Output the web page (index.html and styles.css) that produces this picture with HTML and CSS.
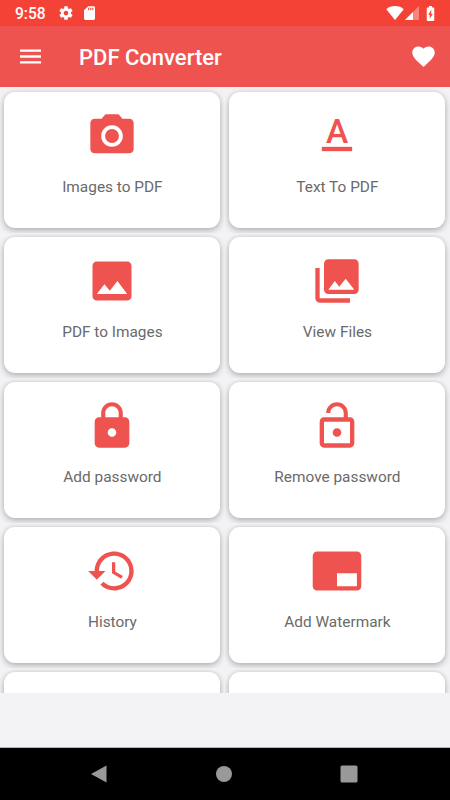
FILE: index.html
```html
<!DOCTYPE html>
<html lang="en">
<head>
    <meta charset="UTF-8">
    <meta name="viewport" content="width=device-width, initial-scale=1.0">
    <title>PDF Converter</title>
    <link rel="stylesheet" href="styles.css">
</head>
<body>
    <div class="screen">
        <!-- Status Bar -->
        <div class="status-bar">
            <span class="time">9:58</span>
            <svg class="gear" viewBox="0 0 24 24"><path d="M19.43 12.98c.04-.32.07-.64.07-.98s-.03-.66-.07-.98l2.11-1.65c.19-.15.24-.42.12-.64l-2-3.46c-.12-.22-.39-.3-.61-.22l-2.49 1c-.52-.4-1.08-.73-1.69-.98l-.38-2.65C14.46 2.18 14.25 2 14 2h-4c-.25 0-.46.18-.49.42l-.38 2.65c-.61.25-1.17.59-1.69.98l-2.49-1c-.23-.09-.49 0-.61.22l-2 3.46c-.13.22-.07.49.12.64l2.11 1.65c-.04.32-.07.65-.07.98s.03.66.07.98l-2.11 1.65c-.19.15-.24.42-.12.64l2 3.46c.12.22.39.3.61.22l2.49-1c.52.4 1.08.73 1.69.98l.38 2.65c.03.24.24.42.49.42h4c.25 0 .46-.18.49-.42l.38-2.65c.61-.25 1.17-.59 1.69-.98l2.49 1c.23.09.49 0 .61-.22l2-3.46c.12-.22.07-.49-.12-.64l-2.11-1.65zM12 15.5c-1.93 0-3.5-1.57-3.5-3.5s1.57-3.5 3.5-3.5 3.5 1.57 3.5 3.5-1.57 3.5-3.5 3.5z"/></svg>
            <svg class="sd-card" viewBox="4 2 16 20"><path d="M18 2h-8L4.02 8 4 20c0 1.100.9 2 2 2h12c1.100 0 2-.9 2-2V4c0-1.100-.9-2-2-2z"/><path class="notch" d="M10 4.500h1.600v3.500H10zM13 4.500h1.600v3.500H13zM16 4.500h1.600v3.500H16z"/></svg>
            <div class="status-right">
                <svg class="wifi" viewBox="0 0 18 14"><path d="M9 14 .3 3.200C2.500 1.200 5.500 0 9 0s6.500 1.200 8.700 3.200z"/></svg>
                <svg class="signal" viewBox="0 0 14 14"><path class="faded" d="M14 0v14H0z"/><path d="M8 6v8H0z"/></svg>
                <svg class="battery" viewBox="7 2 10 20"><path d="M15.670 4H14V2h-4v2H8.330C7.600 4 7 4.600 7 5.330v15.330C7 21.400 7.600 22 8.330 22h7.330c.74 0 1.340-.6 1.340-1.330V5.330C17 4.600 16.400 4 15.670 4zM11 19v-5.500H9L13 7v5.500h2z"/></svg>
            </div>
        </div>

        <!-- App Bar -->
        <div class="app-bar">
            <svg class="menu" viewBox="3 6 18 12"><path d="M3 18h18v-2H3v2zm0-5h18v-2H3v2zm0-7v2h18V6H3z"/></svg>
            <h1>PDF Converter</h1>
            <svg class="heart" viewBox="0 0 24 24"><path d="M12 21.350l-1.450-1.320C5.400 15.360 2 12.280 2 8.500 2 5.420 4.420 3 7.500 3c1.740 0 3.410.81 4.500 2.090C13.090 3.810 14.760 3 16.500 3 19.580 3 22 5.420 22 8.500c0 3.780-3.400 6.860-8.550 11.540L12 21.350z"/></svg>
        </div>

        <!-- Tools -->
        <div class="grid">
            <div class="cell"><div class="card">
                <svg viewBox="0 0 24 24"><circle cx="12" cy="12" r="3.200"/><path d="M9 2L7.170 4H4c-1.100 0-2 .9-2 2v12c0 1.100.9 2 2 2h16c1.100 0 2-.9 2-2V6c0-1.100-.9-2-2-2h-3.170L15 2H9zm3 15c-2.760 0-5-2.240-5-5s2.240-5 5-5 5 2.240 5 5-2.240 5-5 5z"/></svg>
                <p>Images to PDF</p>
            </div></div>
            <div class="cell"><div class="card">
                <svg viewBox="0 0 24 24"><text class="letter" x="12.1" y="15" text-anchor="middle">A</text><path d="M5 17h14v2H5z"/></svg>
                <p>Text To PDF</p>
            </div></div>
            <div class="cell"><div class="card">
                <svg viewBox="0 0 24 24"><path d="M21 19V5c0-1.100-.9-2-2-2H5c-1.100 0-2 .9-2 2v14c0 1.100.9 2 2 2h14c1.100 0 2-.9 2-2zM8.500 13.500l2.500 3.010L14.500 12l4.500 6H5l3.500-4.500z"/></svg>
                <p>PDF to Images</p>
            </div></div>
            <div class="cell"><div class="card">
                <svg viewBox="0 0 24 24"><path d="M22 16V4c0-1.100-.9-2-2-2H8c-1.100 0-2 .9-2 2v12c0 1.100.9 2 2 2h12c1.100 0 2-.9 2-2zm-11-4l2.030 2.710L16 11l4 5H8l3-4zM2 6v14c0 1.100.9 2 2 2h14v-2H4V6H2z"/></svg>
                <p>View Files</p>
            </div></div>
            <div class="cell"><div class="card">
                <svg viewBox="0 0 24 24"><path d="M18 8h-1V6c0-2.760-2.240-5-5-5S7 3.240 7 6v2H6c-1.100 0-2 .9-2 2v10c0 1.100.9 2 2 2h12c1.100 0 2-.9 2-2V10c0-1.100-.9-2-2-2zm-6 9c-1.100 0-2-.9-2-2s.9-2 2-2 2 .9 2 2-.9 2-2 2zm3.100-9H8.900V6c0-1.710 1.390-3.100 3.100-3.100 1.710 0 3.100 1.390 3.100 3.100v2z"/></svg>
                <p>Add password</p>
            </div></div>
            <div class="cell"><div class="card">
                <svg viewBox="0 0 24 24"><path d="M12 17c1.100 0 2-.9 2-2s-.9-2-2-2-2 .9-2 2 .9 2 2 2zm6-9h-1V6c0-2.760-2.240-5-5-5S7 3.240 7 6h1.900c0-1.710 1.390-3.100 3.100-3.100 1.710 0 3.100 1.390 3.100 3.100v2H6c-1.100 0-2 .9-2 2v10c0 1.100.9 2 2 2h12c1.100 0 2-.9 2-2V10c0-1.100-.9-2-2-2zm0 12H6V10h12v10z"/></svg>
                <p>Remove password</p>
            </div></div>
            <div class="cell"><div class="card">
                <svg viewBox="0 0 24 24"><path d="M13 3c-4.970 0-9 4.030-9 9H1l3.890 3.890.07.14L9 12H6c0-3.870 3.130-7 7-7s7 3.130 7 7-3.130 7-7 7c-1.930 0-3.680-.79-4.940-2.060l-1.420 1.420C8.270 19.990 10.510 21 13 21c4.970 0 9-4.030 9-9s-4.030-9-9-9zm-1 5v5l4.280 2.540.72-1.210-3.500-2.080V8H12z"/></svg>
                <p>History</p>
            </div></div>
            <div class="cell"><div class="card">
                <svg viewBox="0 0 24 24"><path fill-rule="evenodd" d="M21.200 3H2.800c-1.100 0-2 .9-2 2v14c0 1.100.9 2 2 2h18.400c1.100 0 2-.9 2-2V5c0-1.100-.9-2-2-2zM12 13h9.200v6H12z"/></svg>
                <p>Add Watermark</p>
            </div></div>
            <div class="cell"><div class="card"></div></div>
            <div class="cell"><div class="card"></div></div>
        </div>

        <!-- Navigation Bar -->
        <div class="nav-bar">
            <svg viewBox="0 0 18 18"><path d="M16.500.5v17L1 9z"/></svg>
            <svg viewBox="0 0 18 18"><circle cx="9" cy="9" r="8"/></svg>
            <svg viewBox="0 0 18 18"><rect x=".5" y=".5" width="17" height="17" rx="1.500"/></svg>
        </div>
    </div>
</body>
</html>
```

FILE: styles.css
```css
/* Base Styles */
* {
    margin: 0;
    padding: 0;
    box-sizing: border-box;
}

body {
    font-family: Roboto, sans-serif;
    background-color: #f3f3f6;
}

svg {
    display: block;
    flex: none;
    fill: white;
}

.screen {
    display: flex;
    flex-direction: column;
    width: 450px;
    height: 800px;
    overflow: hidden;
}

/* Status Bar */
.status-bar {
    display: flex;
    align-items: center;
    height: 26px;
    padding: 0 15px;
    background-color: #f44336;
    color: white;
}

.time {
    width: 43px;
    font-size: 15.6px;
    font-weight: 500;
    line-height: 26px;
    padding-top: 2px;
}

.gear {
    width: 16px;
    height: 16px;
}

.sd-card {
    width: 11px;
    height: 14px;
    margin-left: 10px;
}

.sd-card .notch {
    fill: #f44336;
}

.status-right {
    display: flex;
    align-items: center;
    margin-left: auto;
}

.wifi {
    width: 18px;
    height: 14px;
    margin-right: 1px;
}

.signal {
    width: 14px;
    height: 14px;
    margin-right: 7px;
}

.faded {
    opacity: 0.35;
}

.battery {
    width: 9px;
    height: 15px;
}

/* App Bar */
.app-bar {
    display: flex;
    align-items: center;
    height: 61px;
    padding: 0 13px 0 20px;
    background-color: #ef5350;
}

.menu {
    width: 21px;
    height: 15px;
}

.app-bar h1 {
    flex: 1;
    margin-left: 38px;
    padding-top: 2px;
    font-size: 22px;
    font-weight: 500;
    line-height: 26px;
    color: white;
}

.heart {
    width: 27px;
    height: 27px;
}

/* Tools */
.grid {
    display: grid;
    grid-template-columns: 1fr 1fr;
    grid-auto-rows: 145px;
    height: 606px;
    padding-top: 0.5px;
    overflow: hidden;
}

.cell {
    padding: 4.5px 4.600px 4.5px 4.400px;
    overflow: hidden;
}

.card {
    height: 136px;
    padding-top: 18px;
    border-radius: 11px;
    background-color: white;
    box-shadow: 0 3px 7px rgba(0, 0, 0, 0.22), 0 0 5px rgba(0, 0, 0, 0.12);
}

.card svg {
    width: 52px;
    height: 52px;
    margin: 0 auto;
    fill: #ef5350;
}

.letter {
    font-size: 15.5px;
    font-weight: 500;
}

.card p {
    margin-top: 15px;
    font-size: 15.4px;
    line-height: 20px;
    text-align: center;
    color: #6a6a6a;
}

/* Navigation Bar */
.nav-bar {
    display: flex;
    justify-content: space-between;
    align-items: center;
    height: 53px;
    margin-top: auto;
    padding: 0 92px 0 90px;
    border-top: 1px solid #b5b5b8;
    background-color: black;
}

.nav-bar svg {
    width: 18px;
    height: 18px;
    fill: #999;
}
```
